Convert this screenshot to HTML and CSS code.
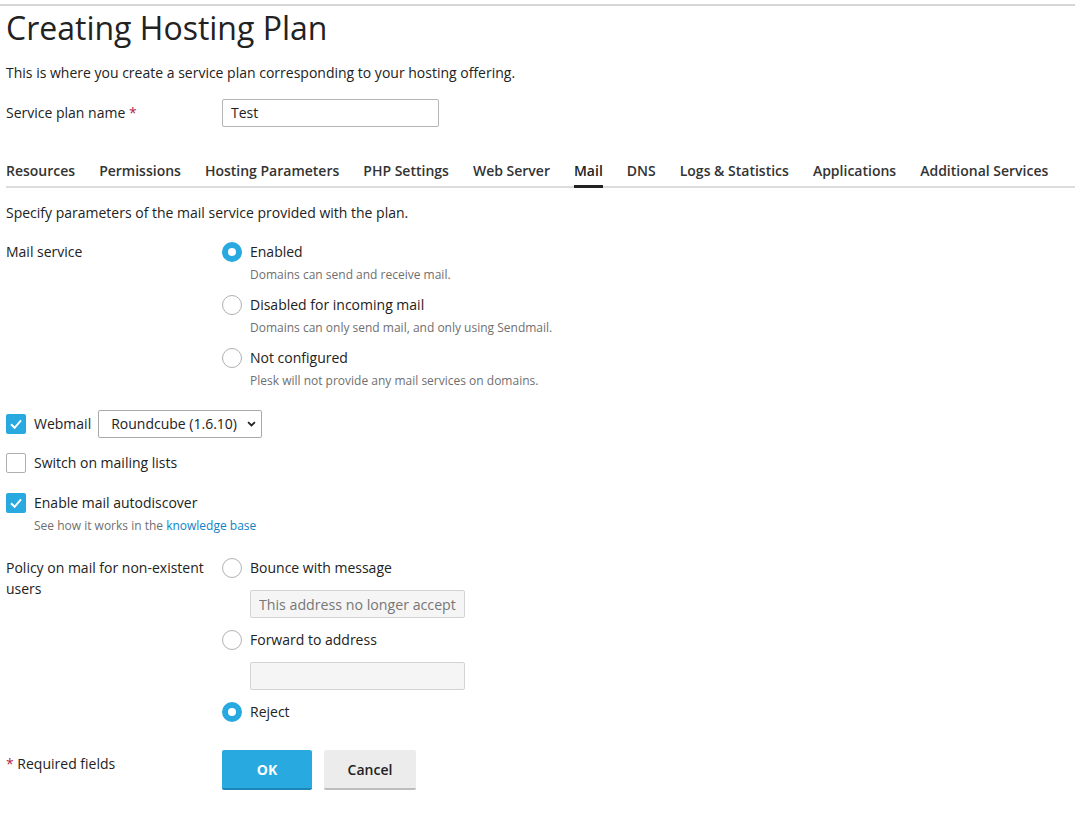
FILE: index.html
```html
<!DOCTYPE html>
<html>
<head>
<meta charset="utf-8">
<link rel="stylesheet" href="styles.css">
</head>
<body>
<div class="topline"></div>
<main class="page">
  <h1 class="title">Creating Hosting Plan</h1>
  <p class="intro">This is where you create a service plan corresponding to your hosting offering.</p>

  <div class="row row-name">
    <div class="label">Service plan name <span class="req">*</span></div>
    <div class="field"><div class="text-input">Test</div></div>
  </div>

  <nav class="tabs">
    <span class="tab">Resources</span>
    <span class="tab">Permissions</span>
    <span class="tab">Hosting Parameters</span>
    <span class="tab">PHP Settings</span>
    <span class="tab">Web Server</span>
    <span class="tab active">Mail</span>
    <span class="tab">DNS</span>
    <span class="tab">Logs &amp; Statistics</span>
    <span class="tab">Applications</span>
    <span class="tab">Additional Services</span>
  </nav>

  <p class="section-desc">Specify parameters of the mail service provided with the plan.</p>

  <div class="row row-mail">
    <div class="label">Mail service</div>
    <div class="field options">
      <div class="option">
        <div class="opt-line"><span class="radio checked"></span><span>Enabled</span></div>
        <div class="hint">Domains can send and receive mail.</div>
      </div>
      <div class="option">
        <div class="opt-line"><span class="radio"></span><span>Disabled for incoming mail</span></div>
        <div class="hint">Domains can only send mail, and only using Sendmail.</div>
      </div>
      <div class="option">
        <div class="opt-line"><span class="radio"></span><span>Not configured</span></div>
        <div class="hint">Plesk will not provide any mail services on domains.</div>
      </div>
    </div>
  </div>

  <div class="check-row webmail">
    <span class="checkbox checked"><svg viewBox="0 0 20 20" width="20" height="20"><path d="M5 10.2 L8.6 13.8 L15 6.4" fill="none" stroke="#fff" stroke-width="2"/></svg></span>
    <span>Webmail</span>
    <div class="select"><span>Roundcube (1.6.10)</span><svg viewBox="0 0 10 7" width="9" height="6"><path d="M1 1.2 L5 5.2 L9 1.2" fill="none" stroke="#222" stroke-width="2"/></svg></div>
  </div>

  <div class="check-row">
    <span class="checkbox"></span>
    <span>Switch on mailing lists</span>
  </div>

  <div class="check-row autodiscover">
    <span class="checkbox checked"><svg viewBox="0 0 20 20" width="20" height="20"><path d="M5 10.2 L8.6 13.8 L15 6.4" fill="none" stroke="#fff" stroke-width="2"/></svg></span>
    <span>Enable mail autodiscover</span>
  </div>
  <div class="hint check-hint">See how it works in the <a class="link">knowledge base</a></div>

  <div class="row row-policy">
    <div class="label">Policy on mail for non-existent users</div>
    <div class="field options">
      <div class="opt-line"><span class="radio"></span><span>Bounce with message</span></div>
      <input class="sub-input disabled" type="text" disabled value="This address no longer accepts mail.">
      <div class="opt-line"><span class="radio"></span><span>Forward to address</span></div>
      <input class="sub-input" type="text" disabled value="">
      <div class="opt-line"><span class="radio checked"></span><span>Reject</span></div>
    </div>
  </div>

  <div class="row row-buttons">
    <div class="label"><span class="req">*</span> Required fields</div>
    <div class="field buttons">
      <button class="btn primary">OK</button>
      <button class="btn">Cancel</button>
    </div>
  </div>
</main>
</body>
</html>
```

FILE: styles.css
```css
html, body {
  margin: 0;
  padding: 0;
  background: #fff;
}
body {
  font-family: "Open Sans", "Liberation Sans", sans-serif;
  font-size: 14px;
  color: #222;
  line-height: 20px;
}
.topline {
  height: 2px;
  margin-top: 4px;
  background: #d6d6d6;
}
.page {
  padding: 0 6px;
}
.title {
  font-weight: 400;
  font-size: 32px;
  line-height: 40px;
  margin: 2px 0 0 0;
  color: #222;
  letter-spacing: 0;
}
.intro {
  margin: 15px 0 0 0;
}
.row {
  display: grid;
  grid-template-columns: 216px 1fr;
}
.label {
  color: #222;
}
.req {
  color: #b21f4b;
}
.row-name {
  margin-top: 16px;
  align-items: center;
}
.text-input {
  width: 199px;
  height: 26px;
  border: 1px solid #b5b5b5;
  border-radius: 2px;
  padding: 0 8px;
  line-height: 26px;
  box-sizing: content-box;
}
.tabs {
  display: flex;
  gap: 24px;
  margin-top: 34px;
  border-bottom: 2px solid #dcdcdc;
  width: 1069px;
}
.tab {
  font-weight: 600;
  color: #333;
  padding-bottom: 4px;
  line-height: 20px;
  margin-bottom: -2px;
  border-bottom: 3px solid transparent;
}
.tab.active {
  color: #222;
  border-bottom-color: #222;
}
.section-desc {
  margin: 15px 0 0 0;
}
.row-mail {
  margin-top: 19px;
}
.options {
  display: flex;
  flex-direction: column;
}
.option {
  margin-bottom: 12px;
}
.opt-line {
  display: flex;
  align-items: center;
  gap: 8px;
  height: 20px;
}
.radio {
  display: inline-block;
  width: 20px;
  height: 20px;
  box-sizing: border-box;
  border: 1px solid #b0b0b0;
  border-radius: 50%;
  background: #fff;
  flex: none;
}
.radio.checked {
  border: 6px solid #28a9e0;
  background: #fff;
}
.hint {
  font-size: 12px;
  color: #6f6f6f;
  line-height: 16px;
  margin-top: 5px;
  padding-left: 28px;
}
.check-row {
  display: flex;
  align-items: center;
  gap: 8px;
  height: 20px;
}
.checkbox {
  width: 20px;
  height: 20px;
  box-sizing: border-box;
  border: 1px solid #b0b0b0;
  border-radius: 2px;
  background: #fff;
  flex: none;
  display: inline-block;
}
.checkbox.checked {
  border: none;
  background: #28a9e0;
}
.checkbox svg {
  display: block;
}
.webmail {
  margin-top: 9px;
  height: 28px;
}
.select {
  display: flex;
  align-items: center;
  justify-content: space-between;
  box-sizing: border-box;
  width: 164px;
  height: 28px;
  border: 1px solid #a9a9a9;
  border-radius: 2px;
  padding: 0 5px 0 12px;
  margin-left: -1px;
}
.select svg {
  display: block;
}
.check-row + .check-row {
  margin-top: 20px;
}
.webmail + .check-row {
  margin-top: 15px;
}
.check-hint {
  padding-left: 28px;
  margin-top: 5px;
}
.link {
  color: #0d83c7;
}
.row-policy {
  margin-top: 24px;
}
.row-policy .label {
  line-height: 21px;
  margin-top: -1px;
  padding-right: 4px;
}
.sub-input {
  display: block;
  margin: 12px 0 12px 28px;
  width: 215px;
  height: 28px;
  box-sizing: border-box;
  border: 1px solid #d3d3d3;
  background: #f5f5f5;
  border-radius: 2px;
  color: #777;
  padding: 0 8px;
  font-family: "Open Sans", "Liberation Sans", sans-serif;
  font-size: 14.2px;
  line-height: 26px;
  outline: none;
}
.row-buttons {
  margin-top: 28px;
}
.row-buttons .label {
  padding-top: 4px;
}
.buttons {
  display: flex;
  gap: 12px;
}
.btn {
  font-family: "Open Sans", "Liberation Sans", sans-serif;
  font-size: 14px;
  font-weight: 600;
  color: #222;
  background: #ececec;
  border: none;
  border-bottom: 2px solid #bdbdbd;
  border-radius: 2px;
  width: 92px;
  height: 40px;
  padding: 0;
}
.btn.primary {
  width: 90px;
  background: #28a9df;
  border-bottom-color: #1d86b6;
  color: #fff;
  font-weight: 700;
}
```
